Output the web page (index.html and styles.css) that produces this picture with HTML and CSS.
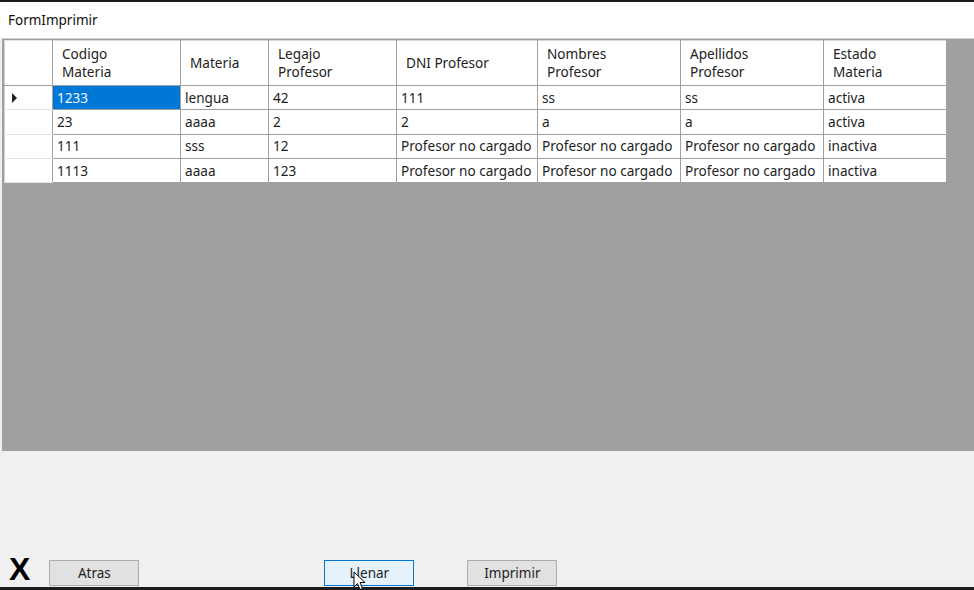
FILE: index.html
```html
<!DOCTYPE html>
<html>
<head>
<meta charset="utf-8">
<link rel="stylesheet" href="styles.css">
</head>
<body>
<div class="window">
  <div class="topbar"></div>
  <div class="titlebar">FormImprimir</div>
  <div class="grid">
    <table class="dgv">
      <colgroup>
        <col class="c-rh"><col class="c1"><col class="c2"><col class="c3"><col class="c4"><col class="c5"><col class="c6"><col class="c7">
      </colgroup>
      <thead>
        <tr>
          <th class="rh"></th>
          <th>Codigo<br>Materia</th>
          <th>Materia</th>
          <th>Legajo<br>Profesor</th>
          <th>DNI Profesor</th>
          <th>Nombres<br>Profesor</th>
          <th>Apellidos<br>Profesor</th>
          <th>Estado<br>Materia</th>
        </tr>
      </thead>
      <tbody>
        <tr class="r1">
          <td class="rh"><span class="arrow"></span></td>
          <td class="sel">1233</td><td>lengua</td><td>42</td><td>111</td><td>ss</td><td>ss</td><td>activa</td>
        </tr>
        <tr>
          <td class="rh"></td>
          <td>23</td><td>aaaa</td><td>2</td><td>2</td><td>a</td><td>a</td><td>activa</td>
        </tr>
        <tr>
          <td class="rh"></td>
          <td>111</td><td>sss</td><td>12</td><td>Profesor no cargado</td><td>Profesor no cargado</td><td>Profesor no cargado</td><td>inactiva</td>
        </tr>
        <tr>
          <td class="rh"></td>
          <td>1113</td><td>aaaa</td><td>123</td><td>Profesor no cargado</td><td>Profesor no cargado</td><td>Profesor no cargado</td><td>inactiva</td>
        </tr>
      </tbody>
    </table>
  </div>
  <div class="footer">
    <span class="xmark">X</span>
    <button class="btn atras">Atras</button>
    <button class="btn llenar">Llenar
      <svg class="cursor" width="14" height="20" viewBox="0 0 14 20"><path d="M1 1 L1 16 L4.5 12.5 L7 18.5 L9.5 17.5 L7 11.5 L12 11.5 Z" fill="#fff" stroke="#000" stroke-width="1"/></svg>
    </button>
    <button class="btn imprimir">Imprimir</button>
  </div>
  <div class="bottombar"></div>
</div>
</body>
</html>
```
FILE: styles.css
```css
html, body {
  margin: 0;
  padding: 0;
}
body {
  width: 974px;
  height: 590px;
  overflow: hidden;
  background: #f0f0f0;
  font-family: "Noto Sans", "Open Sans", sans-serif;
  font-size: 13px;
  color: #1e1e1e;
}
.window {
  display: flex;
  flex-direction: column;
  height: 590px;
}
.topbar {
  height: 2px;
  background: #1c1c1c;
}
.titlebar {
  height: 36px;
  background: #ffffff;
  padding-left: 8px;
  line-height: 36px;
  font-size: 13.5px;
  color: #111;
}
.grid {
  margin-left: 2px;
  background: #a0a0a0;
  border-top: 1px solid #d0d0d0;
  padding: 1px 0 0 2px;
  box-sizing: border-box;
  height: 413px;
}
.dgv {
  border-collapse: collapse;
  table-layout: fixed;
  width: 942px;
  background: #fff;
  font-size: 13.6px;
}
.c-rh { width: 48px; }
.c1 { width: 128px; }
.c2 { width: 88px; }
.c3 { width: 128px; }
.c4 { width: 141px; }
.c5 { width: 143px; }
.c6 { width: 143px; }
.c7 { width: 123px; }
.dgv th {
  height: 44px;
  text-align: left;
  font-weight: normal;
  padding: 0 0 0 9px;
  line-height: 18px;
  border: 1px solid #a0a0a0;
  border-top-color: #d8d8d8;
  color: #222;
  white-space: nowrap;
}
.dgv td {
  height: 23.3px;
  padding: 0 0 0 4px;
  border: 1px solid #a0a0a0;
  white-space: nowrap;
  overflow: hidden;
  line-height: 22px;
}
.dgv .rh {
  border-left-color: #d0d0d0;
  border-top-color: #e4e4e4;
  border-bottom-color: #e4e4e4;
  padding: 0;
}
.dgv thead .rh {
  border-bottom-color: #a0a0a0;
}
.dgv td.sel {
  background: #0078d7;
  color: #eef6ff;
}
.arrow {
  display: block;
  width: 0;
  height: 0;
  margin-left: 7px;
  border-top: 5px solid transparent;
  border-bottom: 5px solid transparent;
  border-left: 5px solid #222;
}
.footer {
  flex: 1;
  display: flex;
  align-items: flex-end;
  padding-bottom: 1px;
}
.xmark {
  font-family: "Liberation Sans", Arial, sans-serif;
  font-weight: bold;
  font-size: 32px;
  line-height: 30px;
  margin-left: 9px;
  margin-bottom: 2px;
  color: #000;
}
.btn {
  position: relative;
  height: 26px;
  width: 90px;
  padding: 0;
  font-family: "Noto Sans", "Open Sans", sans-serif;
  font-size: 13.5px;
  color: #1e1e1e;
  background: #e1e1e1;
  border: 1px solid #adadad;
  box-sizing: border-box;
}
.atras { margin-left: 19px; }
.llenar {
  margin-left: 185px;
  background: #e5f1fb;
  border-color: #0078d7;
}
.imprimir { margin-left: 53px; }
.cursor {
  position: absolute;
  left: 28px;
  top: 10px;
}
.bottombar {
  height: 3px;
  background: #1c1c1c;
}
```
